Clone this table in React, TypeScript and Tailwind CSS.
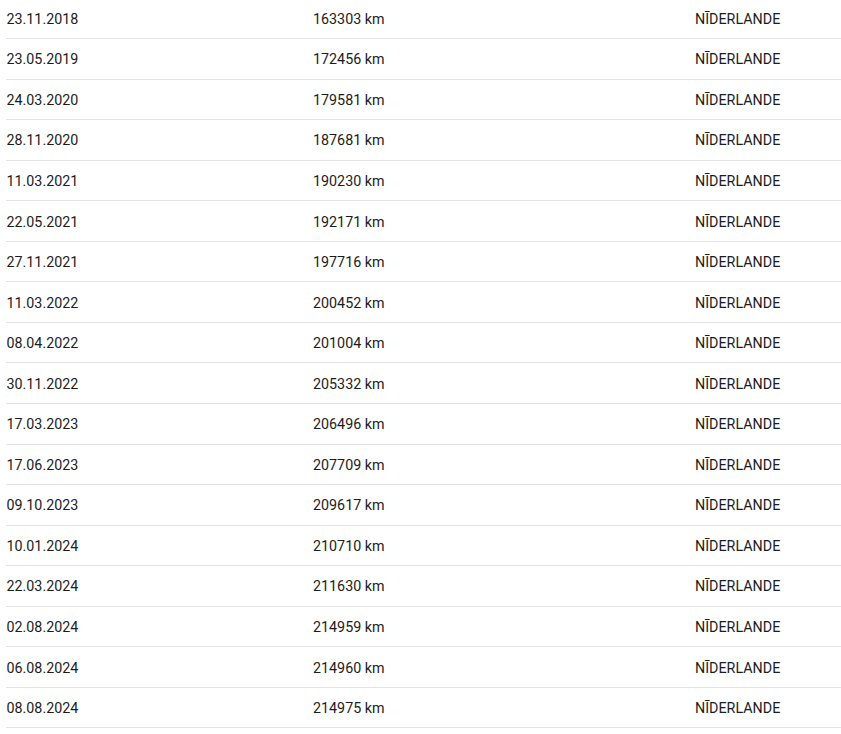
import React from "react";

const rows: [string, string][] = [
  ["23.11.2018", "163303 km"],
  ["23.05.2019", "172456 km"],
  ["24.03.2020", "179581 km"],
  ["28.11.2020", "187681 km"],
  ["11.03.2021", "190230 km"],
  ["22.05.2021", "192171 km"],
  ["27.11.2021", "197716 km"],
  ["11.03.2022", "200452 km"],
  ["08.04.2022", "201004 km"],
  ["30.11.2022", "205332 km"],
  ["17.03.2023", "206496 km"],
  ["17.06.2023", "207709 km"],
  ["09.10.2023", "209617 km"],
  ["10.01.2024", "210710 km"],
  ["22.03.2024", "211630 km"],
  ["02.08.2024", "214959 km"],
  ["06.08.2024", "214960 km"],
  ["08.08.2024", "214975 km"],
];

export default function App() {
  return (
    <div
      className="bg-white w-[841px] h-[734px] overflow-hidden text-[14.3px] text-[#1c1c1c]"
      style={{ fontFamily: "Roboto, 'Liberation Sans', sans-serif" }}
    >
      <div className="mt-[-1.5px] ml-[6px]">
        {rows.map(([d, km], i) => (
          <div
            key={i}
            className="grid grid-cols-[307px_382px_1fr] items-center h-[40.56px] pt-[2.5px] border-b border-[#e3e3e3]"
          >
            <div className="pl-[0.5px]">{d}</div>
            <div>{km}</div>
            <div>NĪDERLANDE</div>
          </div>
        ))}
      </div>
    </div>
  );
}
